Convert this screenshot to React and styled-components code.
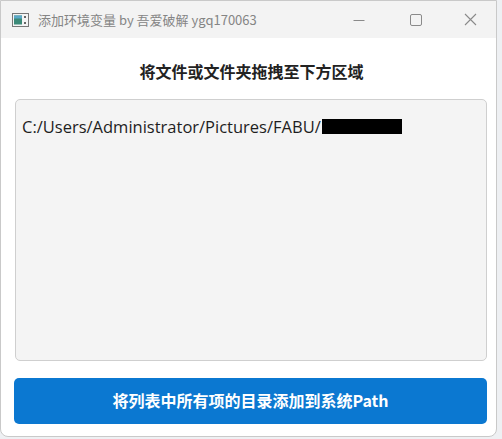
import React from "react";
import styled, { createGlobalStyle } from "styled-components";

const Global = createGlobalStyle`
  html, body { margin: 0; padding: 0; background: #eef0f3; }
  body { font-family: "Microsoft YaHei", "Noto Sans CJK SC", "Liberation Sans", sans-serif; }
  * { box-sizing: border-box; }
`;

const Window = styled.div`
  width: 497px;
  height: 437px;
  background: #ffffff;
  border: 1px solid #c9c9c9;
  border-radius: 0 0 8px 8px;
  display: flex;
  flex-direction: column;
  overflow: hidden;
`;

const TitleBar = styled.div`
  height: 37px;
  background: #f3f3f3;
  display: flex;
  align-items: center;
  padding-left: 11px;
  flex-shrink: 0;
`;

const TitleText = styled.div`
  font-family: "Noto Sans CJK SC", "Liberation Sans", sans-serif;
  font-size: 13px;
  color: #858585;
  margin-left: 9px;
  flex: 1;
  white-space: nowrap;
`;

const Controls = styled.div`
  display: flex;
  height: 100%;
`;

const Ctrl = styled.div`
  width: ${(p) => p.$w || 57}px;
  height: 100%;
  display: flex;
  align-items: center;
  justify-content: center;
`;

const Body = styled.div`
  flex: 1;
  display: flex;
  flex-direction: column;
  padding: 0 9px 12px 13px;
`;

const Heading = styled.div`
  text-align: center;
  font-family: "Noto Sans CJK SC", sans-serif;
  font-weight: 700;
  font-size: 16px;
  color: #222;
  margin-top: 21px;
  height: 24px;
  line-height: 24px;
  padding-left: 2px;
`;

const ListBox = styled.div`
  margin-top: 16px;
  height: 262px;
  background: #f4f4f4;
  border: 1px solid #cfcfcf;
  border-radius: 5px;
  padding: 15px 6px;
  margin-left: 1px;
`;

const PathRow = styled.div`
  font-family: "Open Sans", "Liberation Sans", sans-serif;
  font-size: 16.5px;
  color: #1e1e1e;
  display: flex;
  align-items: center;
  height: 22px;
`;

const Redact = styled.span`
  display: inline-block;
  width: 80px;
  height: 15px;
  background: #000;
  margin-left: 1px;
`;

const Button = styled.div`
  margin-top: 17px;
  height: 46px;
  background: #0b78d1;
  border-radius: 5px;
  color: #fff;
  font-family: "Noto Sans CJK SC", sans-serif;
  font-weight: 700;
  font-size: 16px;
  display: flex;
  align-items: center;
  justify-content: center;
  padding-bottom: 2px;
`;

const AppIcon = () => (
  <svg width="17" height="14" viewBox="0 0 17 14">
    <rect x="0.5" y="0.5" width="16" height="13" fill="#f4f4f4" stroke="#777" />
    <rect x="2" y="2.5" width="8" height="9" fill="#3b8a78" />
    <rect x="2" y="2.5" width="8" height="3" fill="#5aa8c8" />
    <rect x="12" y="3" width="2" height="2" fill="#666" />
    <rect x="12" y="9" width="2" height="2" fill="#666" />
  </svg>
);

export default function App() {
  return (
    <>
      <Global />
      <Window>
        <TitleBar>
          <AppIcon />
          <TitleText>添加环境变量 by 吾爱破解 ygq170063</TitleText>
          <Controls>
            <Ctrl>
              <svg width="12" height="12" viewBox="0 0 12 12">
                <line x1="0.5" y1="6.5" x2="11.5" y2="6.5" stroke="#8a8a8a" strokeWidth="1" />
              </svg>
            </Ctrl>
            <Ctrl>
              <svg width="12" height="12" viewBox="0 0 12 12">
                <rect x="0.5" y="0.5" width="11" height="11" rx="1.5" fill="none" stroke="#8a8a8a" strokeWidth="1" />
              </svg>
            </Ctrl>
            <Ctrl $w={52}>
              <svg width="13" height="13" viewBox="0 0 13 13">
                <path d="M1 1 L12 12 M12 1 L1 12" stroke="#8a8a8a" strokeWidth="1.1" />
              </svg>
            </Ctrl>
          </Controls>
        </TitleBar>
        <Body>
          <Heading>将文件或文件夹拖拽至下方区域</Heading>
          <ListBox>
            <PathRow>
              C:/Users/Administrator/Pictures/FABU/<Redact />
            </PathRow>
          </ListBox>
          <Button>将列表中所有项的目录添加到系统Path</Button>
        </Body>
      </Window>
    </>
  );
}
